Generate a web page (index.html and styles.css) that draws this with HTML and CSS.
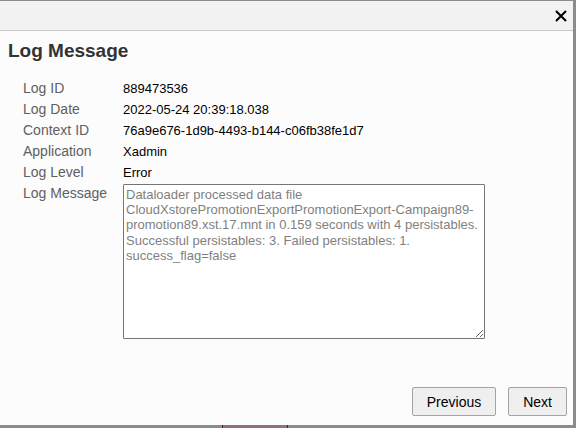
FILE: index.html
```html
<!DOCTYPE html>
<html>
<head>
<meta charset="utf-8">
<link rel="stylesheet" href="styles.css">
</head>
<body>
<div class="screen">
  <div class="dialog">
    <div class="titlebar">
      <button class="close" aria-label="Close">
        <svg width="12" height="12" viewBox="0 0 12 12"><path d="M1 1 L11 11 M11 1 L1 11" stroke="#000" stroke-width="2.1" fill="none"/></svg>
      </button>
    </div>
    <div class="content">
      <h1 class="title">Log Message</h1>
      <dl class="fields">
        <dt>Log ID</dt><dd>889473536</dd>
        <dt>Log Date</dt><dd>2022-05-24 20:39:18.038</dd>
        <dt>Context ID</dt><dd>76a9e676-1d9b-4493-b144-c06fb38fe1d7</dd>
        <dt>Application</dt><dd>Xadmin</dd>
        <dt>Log Level</dt><dd>Error</dd>
        <dt>Log Message</dt><dd><textarea class="message" readonly>Dataloader processed data file CloudXstorePromotionExportPromotionExport-Campaign89-promotion89.xst.17.mnt in 0.159 seconds with 4 persistables. Successful persistables: 3. Failed persistables: 1. success_flag=false</textarea></dd>
      </dl>
    </div>
    <div class="footer">
      <button class="btn">Previous</button>
      <button class="btn">Next</button>
    </div>
  </div>
  <div class="under"><span class="tab"></span></div>
</div>
</body>
</html>
```
FILE: styles.css
```css
html, body {
  margin: 0;
  padding: 0;
}
body {
  background: #8c8c8c;
  font-family: "Liberation Sans", Arial, sans-serif;
  width: 576px;
  height: 428px;
  overflow: hidden;
}
.screen {
  display: flex;
  flex-direction: column;
  width: 576px;
  height: 428px;
}
.dialog {
  margin-top: 1px;
  width: 573px;
  height: 424px;
  background: #fcfcfc;
  display: flex;
  flex-direction: column;
}
.titlebar {
  height: 29px;
  background: #f2f2f2;
  border-bottom: 1px solid #c8c8c8;
  display: flex;
  align-items: center;
  justify-content: flex-end;
  padding-right: 6px;
}
.close {
  border: 0;
  background: transparent;
  padding: 0;
  width: 12px;
  height: 12px;
  display: flex;
}
.content {
  display: flex;
  flex-direction: column;
}
.title {
  margin: 8px 0 16px 8px;
  font-size: 19px;
  line-height: 23px;
  font-weight: bold;
  color: #333;
}
.fields {
  margin: 0;
  padding-left: 23px;
  display: grid;
  grid-template-columns: 100px 1fr;
  grid-auto-rows: minmax(21px, auto);
  align-items: start;
}
.fields dt {
  font-size: 14px;
  line-height: 21px;
  color: #606060;
}
.fields dd {
  margin: 0;
  font-size: 13px;
  line-height: 21px;
  color: #000;
}
.message {
  display: block;
  margin-top: 1px;
  box-sizing: border-box;
  width: 362px;
  height: 155px;
  border: 1px solid #767676;
  border-radius: 1px;
  padding: 2px;
  background: #fff;
  font-family: "Liberation Sans", Arial, sans-serif;
  font-size: 13px;
  line-height: 15.2px;
  color: #7f7f7f;
  outline: none;
}
.footer {
  margin-top: auto;
  display: flex;
  justify-content: flex-end;
  gap: 12px;
  padding: 0 6px 9px 0;
}
.btn {
  height: 29px;
  padding: 0 14px;
  font-family: "Liberation Sans", Arial, sans-serif;
  font-size: 14px;
  color: #000;
  background: #efefef;
  border: 1px solid #a3a3a3;
  border-radius: 2px;
}
.under {
  height: 3px;
  display: flex;
}
.tab {
  margin-left: 222px;
  width: 64px;
  height: 3px;
  background: #8e7474;
  border-left: 1px solid #6d0f0f;
  border-right: 1px solid #6d0f0f;
}
```
